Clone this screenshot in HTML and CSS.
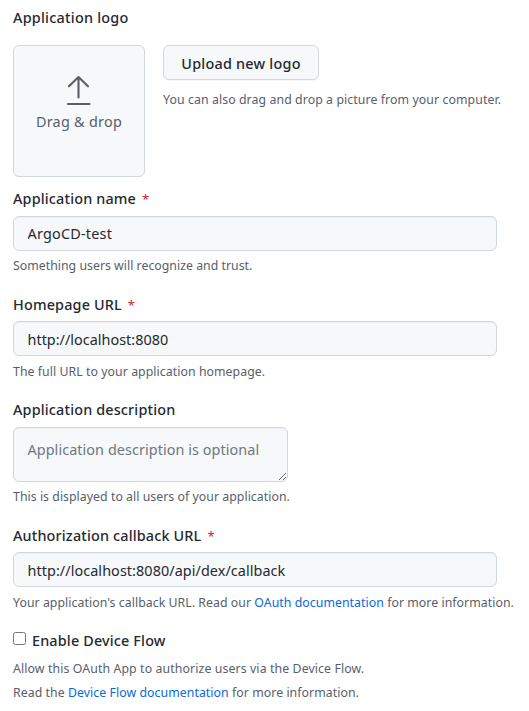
FILE: index.html
```html
<!DOCTYPE html>
<html lang="en">
<head>
<meta charset="utf-8">
<title>OAuth application</title>
<link rel="stylesheet" href="styles.css">
</head>
<body>
<form class="settings">
  <section class="logo-group">
    <div class="label logo-label"><span>Application logo</span></div>
    <div class="logo-row">
      <div class="dropzone">
        <svg class="upload-icon" width="26" height="32" viewBox="0 0 26 32" fill="none" stroke="#57606a" stroke-width="2.1" stroke-linecap="round" stroke-linejoin="round"><path d="M12.500 22.500V2M3 11.300L12.500 2l9.500 9.300M2 29H23.500"/></svg>
        <span class="drop-text">Drag &amp; drop</span>
      </div>
      <div class="upload">
        <button type="button" class="button"><span>Upload new logo</span></button>
        <p class="help"><span class="h-drag">You can also drag and drop a picture from your computer.</span></p>
      </div>
    </div>
  </section>
  <section class="field name-field">
    <label class="label" for="name"><span>Application name</span><span class="required">*</span></label>
    <input class="control" id="name" type="text" value="ArgoCD-test">
    <p class="help"><span class="h-name">Something users will recognize and trust.</span></p>
  </section>
  <section class="field home-field">
    <label class="label" for="home"><span>Homepage URL</span><span class="required">*</span></label>
    <input class="control" id="home" type="text" value="http://localhost:8080">
    <p class="help"><span>The full URL to your application homepage.</span></p>
  </section>
  <section class="field description-field">
    <label class="label" for="description"><span>Application description</span></label>
    <textarea class="control description" id="description" placeholder="Application description is optional"></textarea>
    <p class="help"><span class="h-desc">This is displayed to all users of your application.</span></p>
  </section>
  <section class="field callback-field">
    <label class="label" for="callback"><span>Authorization callback URL</span><span class="required">*</span></label>
    <input class="control" id="callback" type="text" value="http://localhost:8080/api/dex/callback">
    <p class="help"><span class="h-callback">Your application's callback URL. Read our <a href="#">OAuth documentation</a> for more information.</span></p>
  </section>
  <section class="device">
    <label class="label device-label"><input class="checkbox" type="checkbox"><span>Enable Device Flow</span></label>
    <p class="help"><span class="h-allow">Allow this OAuth App to authorize users via the Device Flow.</span></p>
    <p class="help"><span>Read the <a href="#">Device Flow documentation</a> for more information.</span></p>
  </section>
</form>
</body>
</html>
```
FILE: styles.css
```css
* { box-sizing: border-box; }
body {
  margin: 0;
  background: #fff;
  color: #24292f;
  font-family: "Noto Sans", "Open Sans", sans-serif;
  font-size: 14.4px;
}
.settings { padding: 6px 0 0 13px; }
.label {
  display: flex;
  height: 24px;
  line-height: 24px;
  font-weight: 500;
  font-size: 14.4px;
  letter-spacing: .16px;
  white-space: nowrap;
}
.logo-label { letter-spacing: .24px; }
.required { margin-left: 6px; color: #cf222e; font-weight: 400; font-size: 13px; }
.help {
  margin: 0;
  height: 24px;
  line-height: 24px;
  font-size: 12.3px;
  letter-spacing: .06px;
  color: #57606a;
  white-space: nowrap;
}
.h-drag { letter-spacing: .09px; }
.h-name { letter-spacing: .02px; }
.h-desc { letter-spacing: .04px; }
.h-callback { letter-spacing: .05px; }
.h-allow { letter-spacing: .11px; }
.help a { color: #0969da; text-decoration: none; }
.logo-row { display: flex; gap: 18px; margin-top: 15px; }
.dropzone {
  display: flex;
  flex-direction: column;
  align-items: center;
  width: 132px;
  height: 132px;
  padding-top: 29px;
  border: 1px solid #d0d7de;
  border-radius: 6px;
  background: #f6f8fa;
  color: #57606a;
}
.upload-icon { flex: none; }
.drop-text { line-height: 24px; margin-top: 3px; letter-spacing: .28px; }
.button {
  display: block;
  width: 156px;
  height: 35px;
  padding: 2px 0 0;
  border: 1px solid #d5d8da;
  border-radius: 6px;
  background: #f6f8fa;
  box-shadow: 0 1px 0 rgba(27, 31, 36, .04);
  color: #24292f;
  font: 500 14.4px/31px "Noto Sans", sans-serif;
  letter-spacing: .24px;
}
.upload .help { margin-top: 8px; }
.name-field { margin-top: 10px; }
.home-field { margin-top: 15px; }
.description-field { margin-top: 14px; }
.callback-field { margin-top: 15px; }
.device { margin-top: 14px; }
.control {
  display: block;
  width: 484px;
  height: 35px;
  margin: 5px 0 3px;
  padding: 0 13px 0 13.5px;
  border: 1px solid #d0d7de;
  border-radius: 6px;
  outline: 0;
  background: #f6f8fa;
  box-shadow: inset 0 1px 0 rgba(208, 215, 222, .2);
  color: #24292f;
  font: 14.4px/24px "Noto Sans", sans-serif;
  letter-spacing: .07px;
}
#name { letter-spacing: .22px; }
#home { letter-spacing: .02px; }
.home-field .control,
.callback-field .control {
  margin-top: 4px;
  margin-bottom: 4px;
  padding-top: 2px;
}
.description {
  width: 275px;
  height: 55px;
  padding-top: 10px;
  margin-bottom: 3px;
  resize: both;
}
.description::placeholder { color: #6e7781; opacity: 1; }
.checkbox { width: 13px; height: 13px; margin: 3px 6px 0 0; }
.device-label { margin-bottom: 4px; }
```
